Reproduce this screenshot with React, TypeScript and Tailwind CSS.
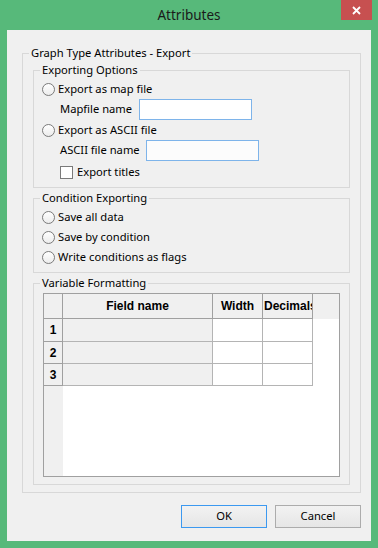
import React from "react";

function Radio({ label }: { label: string }) {
  return (
    <div className="flex h-[20px] items-center">
      <span className="h-[13px] w-[13px] shrink-0 rounded-full border border-[#7a7a7a] bg-gradient-to-b from-[#ffffff] to-[#ececec]" />
      <span className="ml-[3px]">{label}</span>
    </div>
  );
}

function Group({
  title,
  className,
  bodyClass,
  children,
}: {
  title: string;
  className?: string;
  bodyClass?: string;
  children: React.ReactNode;
}) {
  return (
    <fieldset className={`border border-[#d8d8d8] ${className ?? ""}`}>
      <legend className="ml-[6px] h-[16px] px-[2px] leading-[16px]">{title}</legend>
      <div className={bodyClass}>{children}</div>
    </fieldset>
  );
}

const rows = ["1", "2", "3"];

function FormatGrid() {
  return (
    <div className="flex h-[184px] flex-col border border-[#a0a0a0] bg-white font-['Liberation_Sans',sans-serif] text-[12px] font-bold">
      {/* header */}
      <div className="flex h-[25px] shrink-0 bg-[#f0f0f0]">
        <div className="w-[19px] border-r border-b border-[#a0a0a0]" />
        <div className="flex w-[150px] items-center justify-center border-r border-b border-[#a0a0a0]">
          Field name
        </div>
        <div className="flex w-[50px] items-center justify-center border-r border-b border-[#a0a0a0]">
          Width
        </div>
        <div className="flex w-[50px] items-center overflow-hidden whitespace-nowrap border-r border-b border-[#a0a0a0] pl-[1px]">
          Decimals
        </div>
      </div>
      {rows.map((r, i) => (
        <div key={r} className={`flex shrink-0 ${i === 0 ? "h-[23px]" : "h-[22px]"}`}>
          <div className="flex w-[19px] items-center justify-center border-r border-b border-[#a0a0a0] bg-[#f0f0f0]">
            {r}
          </div>
          <div className="w-[150px] border-r border-b border-[#b4b4b4] bg-[#f0f0f0]" />
          <div className="w-[50px] border-r border-b border-[#b4b4b4]" />
          <div className="w-[50px] border-r border-b border-[#b4b4b4]" />
        </div>
      ))}
      <div className="flex flex-1">
        <div className="w-[19px] bg-[#f0f0f0]" />
      </div>
    </div>
  );
}

export default function App() {
  return (
    <div className="flex h-[548px] w-[378px] flex-col bg-[#57b97a] font-['Noto_Sans',sans-serif] text-[11.2px] text-black">
      {/* title bar */}
      <div className="relative flex h-[30px] shrink-0 items-center justify-center">
        <span className="text-[13.5px] text-[#1a1a1a]">Attributes</span>
        <button className="absolute right-[6px] top-0 flex h-[20px] w-[31px] items-center justify-center bg-[#c75050]">
          <svg width="9" height="9" viewBox="0 0 9 9">
            <path d="M1 1L8 8M8 1L1 8" stroke="white" strokeWidth="1.8" />
          </svg>
        </button>
      </div>

      {/* client area */}
      <div className="mx-[7px] mb-[7px] flex flex-1 flex-col bg-[#f0f0f0]">
        <Group
          title="Graph Type Attributes - Export"
          className="ml-[15px] mr-[10px] mt-[15px]"
          bodyClass="px-[10px] pb-[7px]"
        >
          <Group title="Exporting Options" className="mt-[1px]" bodyClass="pl-[8px] pt-[1px] pb-[4px]">
            <Radio label="Export as map file" />
            <div className="flex h-[21px] items-center pl-[18px]">
              <span className="w-[79px]">Mapfile name</span>
              <div className="h-[21px] w-[113px] border border-[#7eb4ea] bg-white" />
            </div>
            <Radio label="Export as ASCII file" />
            <div className="flex h-[21px] items-center pl-[18px]">
              <span className="w-[86px]">ASCII file name</span>
              <div className="h-[21px] w-[113px] border border-[#7eb4ea] bg-[#fcfcfc]" />
            </div>
            <div className="flex h-[22px] items-center pl-[18px]">
              <span className="h-[13px] w-[13px] border border-[#7a7a7a] bg-white" />
              <span className="ml-[4px]">Export titles</span>
            </div>
          </Group>

          <Group title="Condition Exporting" className="mt-[2px]" bodyClass="pl-[8px] pt-[1px] pb-[5px]">
            <Radio label="Save all data" />
            <Radio label="Save by condition" />
            <Radio label="Write conditions as flags" />
          </Group>

          <Group title="Variable Formatting" className="mt-[2px]" bodyClass="px-[9px] pt-[2px] pb-[7px]">
            <FormatGrid />
          </Group>
        </Group>

        {/* buttons */}
        <div className="mt-[12px] flex justify-end gap-[8px] pr-[10px]">
          <button className="h-[23px] w-[86px] border border-[#3c99f0] bg-gradient-to-b from-[#f2f2f2] to-[#e6e6e6]">
            OK
          </button>
          <button className="h-[23px] w-[86px] border border-[#acacac] bg-gradient-to-b from-[#f2f2f2] to-[#e6e6e6]">
            Cancel
          </button>
        </div>
      </div>
    </div>
  );
}
